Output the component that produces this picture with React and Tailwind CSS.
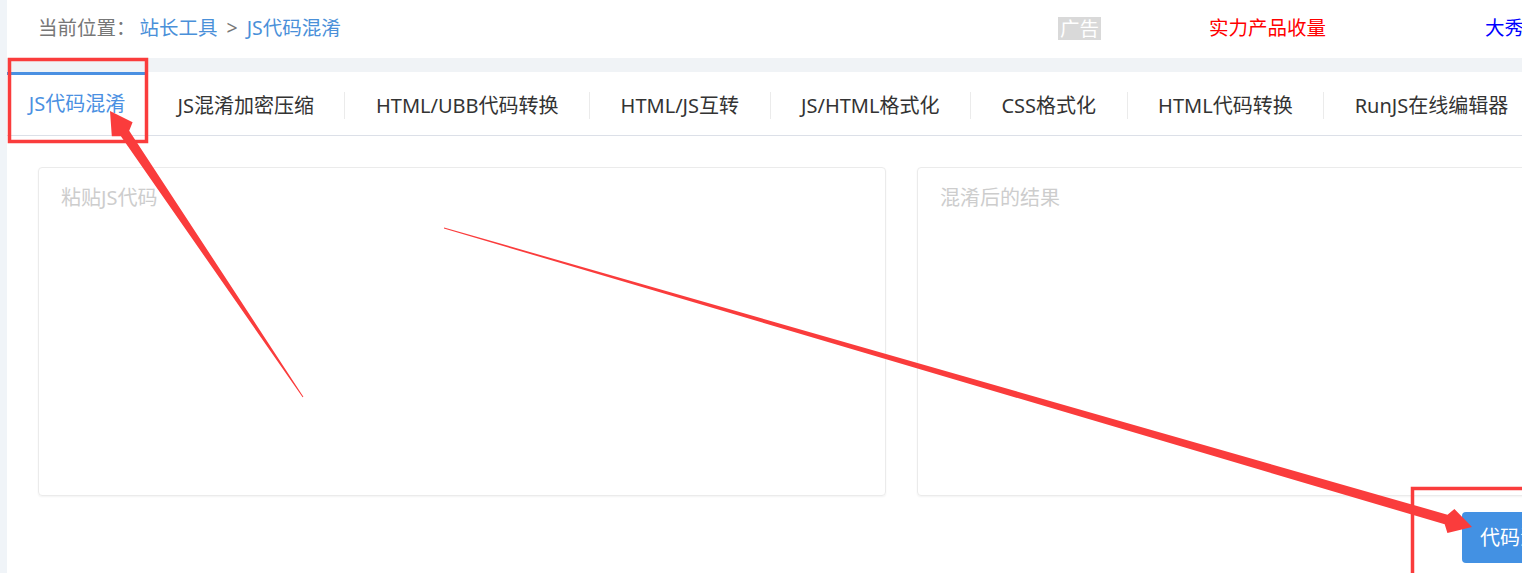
import React from 'react'

const tabs = [
  'JS代码混淆',
  'JS混淆加密压缩',
  'HTML/UBB代码转换',
  'HTML/JS互转',
  'JS/HTML格式化',
  'CSS格式化',
  'HTML代码转换',
  'RunJS在线编辑器',
]

function Annotations() {
  return (
    <svg className="absolute inset-0 pointer-events-none" width="1522" height="573" viewBox="0 0 1522 573">
      <rect x="9.5" y="59.5" width="137" height="82" fill="none" stroke="#fa3c3c" strokeWidth="3.5" />
      <rect x="1412.5" y="488.5" width="200" height="200" fill="none" stroke="#fa3c3c" strokeWidth="3.5" />
      {/* arrow to the active tab */}
      <polygon
        fill="#fa3c3c"
        points="110,111 132.6,122.3 129.2,130.7 303.4,396.7 302.6,397.3 120.9,136.2 111.8,136.2"
      />
      {/* arrow to the button */}
      <polygon
        fill="#fa3c3c"
        points="1472,527 1447.4,532.9 1444.7,524.3 443.9,228.5 444.1,227.5 1447.5,514.7 1454.4,508.9"
      />
    </svg>
  )
}

export default function App() {
  return (
    <div
      className="relative w-[1522px] h-[573px] overflow-hidden bg-white flex"
      style={{ fontFamily: "'Noto Sans', 'Noto Sans CJK SC', sans-serif" }}
    >
      <div className="w-[7px] shrink-0 bg-[#f0f4f8]" />
      <div className="flex-1 min-w-0 flex flex-col">
        {/* breadcrumb + ads */}
        <div className="h-[58px] flex items-center pl-[31px] pb-[2px] text-[19.5px] whitespace-nowrap">
          <div className="w-[1020px] shrink-0 flex items-center">
            <span className="text-[#777]">当前位置：</span>
            <span className="text-[#4a90d9] ml-[4px]">站长工具</span>
            <span className="text-[#777] mx-[9px]">&gt;</span>
            <span className="text-[#4a90d9]">JS代码混淆</span>
          </div>
          <span className="bg-[#d9d9d9] text-white px-[2px] leading-[23px]">广告</span>
          <span className="text-[#ff0000] ml-[108px]">实力产品收量</span>
          <span className="text-[#0000ff] ml-[159px]">大秀</span>
        </div>
        <div className="h-[14px] bg-[#f0f3f6]" />

        {/* tabs */}
        <div className="h-[64px] flex items-center border-b border-[#dce0e8] whitespace-nowrap text-[20px] text-[#333]">
          {tabs.map((t, i) => {
            if (i === 0) {
              return (
                <div
                  key={t}
                  className="h-full w-[140px] shrink-0 flex items-center justify-center border-t-[3px] border-[#4a90e2] text-[#4a90e2] pb-[3px]"
                >
                  {t}
                </div>
              )
            }
            return (
              <React.Fragment key={t}>
                {i > 1 && <div className="w-px h-[27px] bg-[#ebebeb] shrink-0 mt-[4px]" />}
                <div className="px-[30.5px] shrink-0 pt-[5px]">{t}</div>
              </React.Fragment>
            )
          })}
        </div>

        {/* editors */}
        <div className="flex gap-[31px] pl-[31px] pt-[31px]">
          <textarea
            className="w-[848px] h-[329px] shrink-0 resize-none rounded-[4px] border border-[#ebebeb] shadow-[0_1px_2px_rgba(0,0,0,0.05)] px-[22px] py-[15px] text-[20px] outline-none placeholder:text-[#cdcdcd]"
            placeholder="粘贴JS代码"
          />
          <textarea
            className="w-[848px] h-[329px] shrink-0 resize-none rounded-[4px] border border-[#ebebeb] shadow-[0_1px_2px_rgba(0,0,0,0.05)] px-[22px] py-[15px] text-[20px] outline-none placeholder:text-[#cdcdcd]"
            placeholder="混淆后的结果"
          />
        </div>

        <div className="pt-[16px] pl-[1455px]">
          <button className="h-[51px] w-[140px] shrink-0 rounded-[4px] bg-[#4391e3] text-white text-[20px] text-left pl-[18px] whitespace-nowrap">
            代码混淆
          </button>
        </div>
      </div>
      <Annotations />
    </div>
  )
}
